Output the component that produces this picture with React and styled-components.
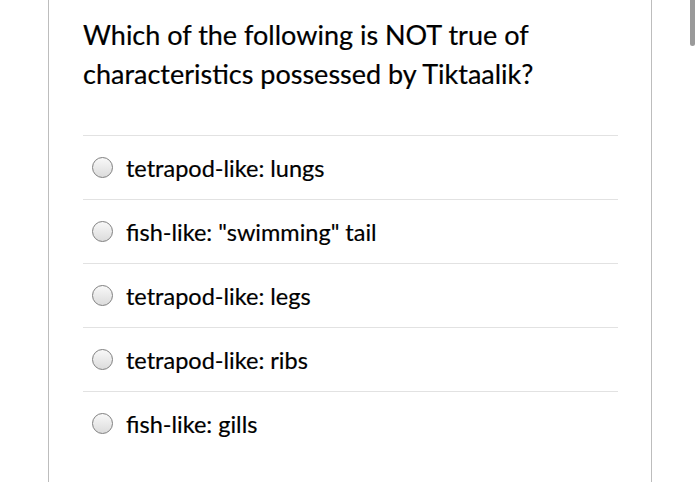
import React from "react";
import styled, { createGlobalStyle } from "styled-components";

const GlobalStyle = createGlobalStyle`
  html, body {
    margin: 0;
    padding: 0;
    background: #fff;
    overflow: hidden;
  }
  body {
    font-family: Lato, "Noto Sans", sans-serif;
    color: #000;
  }
`;

const Page = styled.div`
  width: 700px;
  height: 485px;
  position: relative;
  overflow: hidden;
`;

const Card = styled.div`
  margin-left: 48px;
  width: 604px;
  height: 482px;
  border-left: 1px solid #bdbdbd;
  border-right: 1px solid #bdbdbd;
  padding: 15px 33px 0 34px;
  box-sizing: border-box;
`;

const Question = styled.h2`
  margin: 0 0 42px;
  font-size: 27px;
  font-weight: 400;
  line-height: 39px;
  color: #000;
  -webkit-text-stroke: 0.2px #000;
`;

const Options = styled.ul`
  list-style: none;
  margin: 0;
  padding: 0;
`;

const Option = styled.li`
  display: flex;
  align-items: center;
  gap: 13px;
  height: 63px;
  border-top: 1px solid #e2e2e2;
  padding-left: 9px;
  font-size: 23.5px;
  color: #000;
  -webkit-text-stroke: 0.2px #000;
`;

const Radio = styled.span`
  width: 19px;
  height: 19px;
  border-radius: 50%;
  border: 1px solid #7f7f7f;
  background: linear-gradient(180deg, #f8f8f8 0%, #dcdcdc 100%);
  flex: none;
`;

const Scrollbar = styled.div`
  position: absolute;
  top: 0;
  left: 690px;
  width: 5px;
  height: 46px;
  background: #9a9a9a;
  border-radius: 0 0 3px 3px;
`;

const options = [
  "tetrapod-like: lungs",
  'fish-like: "swimming" tail',
  "tetrapod-like: legs",
  "tetrapod-like: ribs",
  "fish-like: gills",
];

export default function App() {
  return (
    <>
      <GlobalStyle />
      <Page>
        <Card>
          <Question>
            Which of the following is NOT true of
            <br />
            characteristics possessed by Tiktaalik?
          </Question>
          <Options>
            {options.map((o) => (
              <Option key={o}>
                <Radio />
                {o}
              </Option>
            ))}
          </Options>
        </Card>
        <Scrollbar />
      </Page>
    </>
  );
}
